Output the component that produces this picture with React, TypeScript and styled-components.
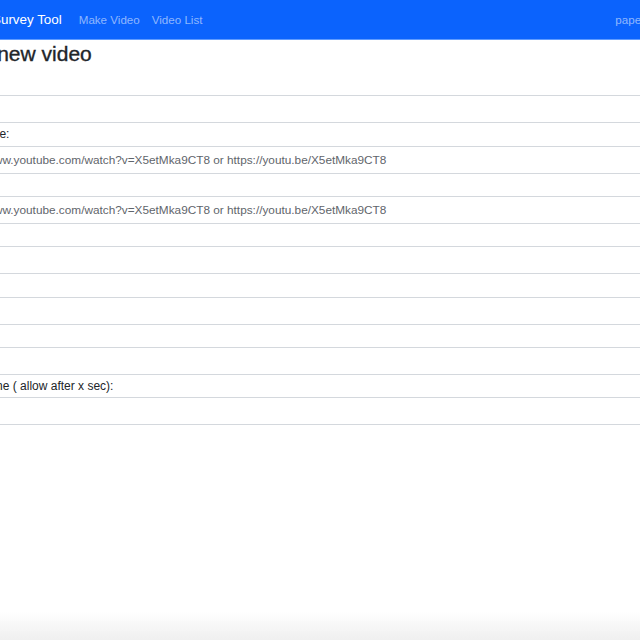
import React from "react";
import styled, { createGlobalStyle } from "styled-components";

const Global = createGlobalStyle`
  html, body { margin: 0; padding: 0; background: #fff; overflow: hidden; }
  body {
    font-family: "Liberation Sans", Helvetica, Arial, sans-serif;
    font-size: 12px;
    color: #212529;
  }
  * { box-sizing: border-box; }
`;

const Page = styled.div`
  width: 740px;
  margin-left: -60px;
`;

const NavBar = styled.nav`
  height: 40px;
  padding-left: 52px;
  background: #0b63fd;
  border-bottom: 1px solid #5f9bff;
  display: flex;
  align-items: center;
`;

const Brand = styled.a`
  color: #fff;
  font-size: 13.4px;
  margin-right: 11px;
  text-decoration: none;
`;

const NavLink = styled.a<{ $right?: boolean }>`
  color: rgba(255, 255, 255, 0.55);
  font-size: 11.6px;
  padding: 0 6px;
  text-decoration: none;
  margin-left: ${(p) => (p.$right ? "auto" : "0")};
`;

const Container = styled.main`
  display: flex;
  flex-direction: column;
`;

const Heading = styled.h3`
  margin: 1px 0 7px;
  font-size: 21px;
  font-weight: 400;
  -webkit-text-stroke: 0.35px #212529;
  line-height: 25px;
`;

const Field = styled.div`
  display: flex;
  flex-direction: column;
`;

const Label = styled.label`
  display: block;
  line-height: 22.33px;
  height: 22.33px;
`;

const Input = styled.input`
  display: block;
  width: 100%;
  height: 28px;
  padding: 0 9px;
  border: 1px solid #d4d8dd;
  border-radius: 3px;
  font-family: inherit;
  font-size: 11.8px;
  color: #495057;
  outline: none;
  &::placeholder { color: #5f656b; }
`;

const BottomFade = styled.div`
  position: fixed;
  left: 0;
  right: 0;
  bottom: 0;
  height: 28px;
  background: linear-gradient(to bottom, rgba(240,240,240,0), #efefef);
  pointer-events: none;
`;

const URL_HINT =
  "https://www.youtube.com/watch?v=X5etMka9CT8 or https://youtu.be/X5etMka9CT8";

const fields: { label: string; placeholder?: string }[] = [
  { label: "Title:" },
  { label: "Left youtube:", placeholder: URL_HINT },
  { label: "Right link:", placeholder: URL_HINT },
  { label: "Question:" },
  { label: "Answer A:" },
  { label: "Answer B:" },
  { label: "Enable Done ( allow after x sec):" },
];

export default function App() {
  return (
    <>
      <Global />
      <Page>
        <NavBar>
          <Brand href="#">Survey Tool</Brand>
          <NavLink href="#">Make Video</NavLink>
          <NavLink href="#">Video List</NavLink>
          <NavLink href="#" $right>paper_user</NavLink>
        </NavBar>
        <Container>
          <Heading>Make new video</Heading>
          {fields.map((f, i) => (
            <Field key={i}>
              <Label htmlFor={`f${i}`}>{f.label}</Label>
              <Input id={`f${i}`} placeholder={f.placeholder} />
            </Field>
          ))}
        </Container>
      </Page>
      <BottomFade />
    </>
  );
}
